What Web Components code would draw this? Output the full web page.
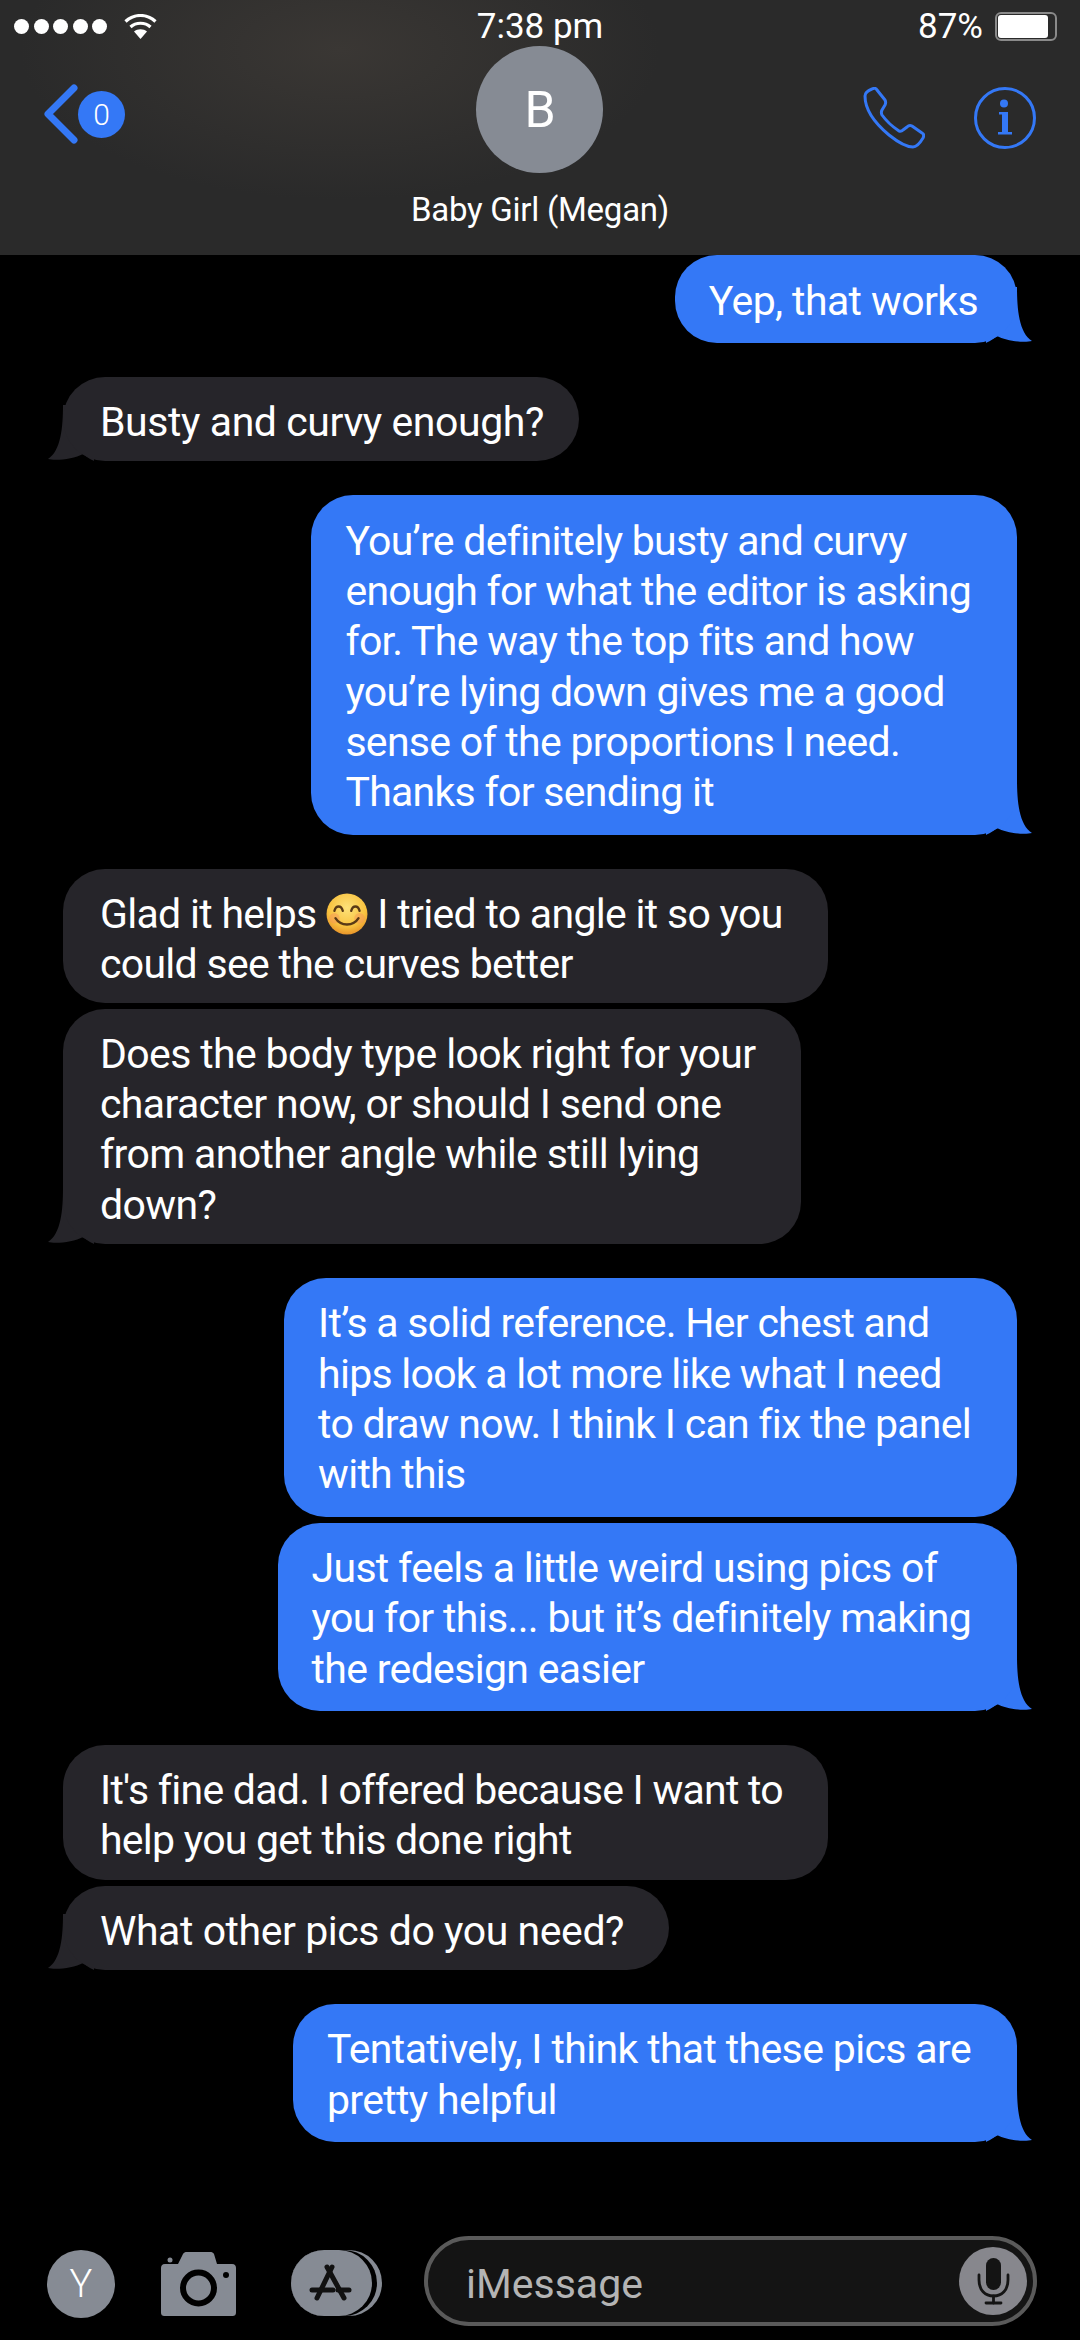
<!doctype html>
<html>
<head>
<meta charset="utf-8">
<title>Messages</title>
<style>
  html, body { margin: 0; padding: 0; background: #000; }
  body { width: 1080px; height: 2340px; overflow: hidden; font-family: Roboto, "Noto Sans", sans-serif; color: #fff; display: flex; flex-direction: column; }
  msg-list { flex: 1; }
</style>
</head>
<body>
<chat-header name="Baby Girl (Megan)" initial="B" badge="0"></chat-header>
<msg-list>
  <chat-bubble side="out" tail style="--pad-r:39px">Yep, that works</chat-bubble>
  <chat-bubble side="in" tail class="new" style="--pad-r:35px;--ls:-0.42px">Busty and curvy enough?</chat-bubble>
  <chat-bubble side="out" tail class="new" style="--ls:-0.72px">You’re definitely busty and curvy<br>enough for what the editor is asking<br>for. The way the top fits and how<br>you’re lying down gives me a good<br>sense of the proportions I need.<br>Thanks for sending it</chat-bubble>
  <chat-bubble side="in" class="new" style="--ls:-0.7px">Glad it helps <smile-emoji></smile-emoji> I tried to angle it so you<br>could see the curves better</chat-bubble>
  <chat-bubble side="in" tail style="--ls:-0.63px">Does the body type look right for your<br>character now, or should I send one<br>from another angle while still lying<br>down?</chat-bubble>
  <chat-bubble side="out" class="new" style="--ls:-0.74px">It’s a solid reference. Her chest and<br>hips look a lot more like what I need<br>to draw now. I think I can fix the panel<br>with this</chat-bubble>
  <chat-bubble side="out" tail style="--ls:-0.67px">Just feels a little weird using pics of<br>you for this... but it’s definitely making<br>the redesign easier</chat-bubble>
  <chat-bubble side="in" class="new" style="--ls:-0.74px">It's fine dad. I offered because I want to<br>help you get this done right</chat-bubble>
  <chat-bubble side="in" tail style="--ls:-0.44px">What other pics do you need?</chat-bubble>
  <chat-bubble side="out" tail class="new" style="--ls:-0.64px">Tentatively, I think that these pics are<br>pretty helpful</chat-bubble>
</msg-list>
<input-bar></input-bar>

<script>
class StatusBar extends HTMLElement {
  constructor() {
    super();
    this.attachShadow({ mode: "open" });
    this.shadowRoot.innerHTML = `
      <style>
        :host { display: grid; grid-template-columns: 1fr auto 1fr; align-items: center; height: 52px; padding: 0 23px; font-size: 35px; color: #fff; }
        .left { display: flex; align-items: center; gap: 17px; margin-left: -9px; }
        .dots { display: flex; gap: 4.5px; }
        .dots i { width: 15px; height: 15px; border-radius: 50%; background: #fff; }
        .right { display: flex; align-items: center; justify-content: flex-end; gap: 12px; }
        .batt { width: 62px; height: 29px; box-sizing: border-box; border: 2px solid #8a8a8a; border-radius: 6px; padding: 1px 7px 1px 1px; }
        .batt b { display: block; height: 100%; background: #fff; border-radius: 3px; }
      </style>
      <div class="left">
        <div class="dots"><i></i><i></i><i></i><i></i><i></i></div>
        <svg width="33" height="25" viewBox="0 0 33 25" fill="none" stroke="#fff" stroke-width="3.2">
          <path d="M1.5 7.5 C10 -0.5 23 -0.5 31.5 7.5"/><path d="M6.5 13 C12 8 21 8 26.5 13"/>
          <path d="M16.5 25 L10 17.5 C13.5 14.5 19.5 14.5 23 17.5 Z" fill="#fff" stroke="none"/>
        </svg>
      </div>
      <span>7:38 pm</span>
      <div class="right"><span>87%</span><div class="batt"><b></b></div></div>`;
  }
}
customElements.define("status-bar", StatusBar);

class ChatHeader extends HTMLElement {
  constructor() {
    super();
    this.attachShadow({ mode: "open" });
    this.shadowRoot.innerHTML = `
      <style>
        :host { display: block; height: 255px; flex: none; position: relative;
          background: radial-gradient(ellipse 320px 150px at 340px 50px, #3a3734, transparent), #2a2a2a; color: #fff; }
        .nav { display: grid; grid-template-columns: 1fr auto 1fr; align-items: start; padding: 0 44px; margin-top: -6px; }
        .back { display: flex; align-items: center; gap: 0; margin-top: 38px; }
        .badge { width: 47px; height: 47px; border-radius: 50%; background: #3478f6; font-size: 30px; font-weight: 300; display: flex; align-items: center; justify-content: center; }
        .mid { display: flex; flex-direction: column; align-items: center; }
        .avatar { width: 127px; height: 127px; border-radius: 50%; background: #868b94; font-size: 50px; display: flex; align-items: center; justify-content: center; }
        .name { font-size: 33px; line-height: 40px; margin-top: 17px; white-space: nowrap; letter-spacing: -0.25px; }
        .acts { display: flex; justify-content: flex-end; gap: 49px; margin-top: 41px; }
      </style>
      <status-bar></status-bar>
      <div class="nav">
        <div class="back">
          <svg width="34" height="60" viewBox="0 0 34 60" fill="none" stroke="#3478f6" stroke-width="7" stroke-linecap="round" stroke-linejoin="round"><path d="M30 4 L4 30 L30 56"/></svg>
          <span class="badge">${this.getAttribute("badge")}</span>
        </div>
        <div class="mid">
          <div class="avatar">${this.getAttribute("initial")}</div>
          <div class="name">${this.getAttribute("name")}</div>
        </div>
        <div class="acts">
          <svg width="62" height="62" viewBox="0 0 62 62" fill="none" stroke="#3478f6" stroke-width="3" stroke-linejoin="round">
            <path d="M2 9 C2 6 4 4 9 2 C11 1 13 1 14 3 L22 13 C23 15 23 16 22 18 L19 23 C18 25 18 26 19 28 C24 35 30 40 36 44 C38 44.5 39 44 40 43 L44 40 C46 38 47 38 49 39 L59 46 C61 47 61 49 60 51 C57 56 54 60 50 60 C44 60 36 56 26 48 C14 38 2 24 2 9 Z"/>
          </svg>
          <svg width="62" height="62" viewBox="0 0 62 62" fill="none" stroke="#3478f6" stroke-width="3">
            <circle cx="31" cy="31" r="29.5"/>
            <circle cx="30" cy="16.5" r="4" fill="#3478f6" stroke="none"/>
            <path d="M25 25 H34 V45 H38 V47.5 H24 V45 H28 V27.5 H25 Z" fill="#3478f6" stroke="none"/>
          </svg>
        </div>
      </div>`;
  }
}
customElements.define("chat-header", ChatHeader);

class MsgList extends HTMLElement {
  constructor() {
    super();
    this.attachShadow({ mode: "open" });
    this.shadowRoot.innerHTML = `
      <style>
        :host { display: flex; flex-direction: column; gap: 6px; padding: 0 63px; overflow: hidden; }
      </style>
      <slot></slot>`;
  }
}
customElements.define("msg-list", MsgList);

const bubbleTemplate = document.createElement("template");
bubbleTemplate.innerHTML = `
  <style>
    :host { display: block; align-self: flex-start; position: relative; font-size: 41px; line-height: 50.2px; letter-spacing: var(--ls, -0.6px); white-space: nowrap; color: #fff; }
    :host([side="out"]) { align-self: flex-end; }
    :host(.new) { margin-top: 28px; }
    .body { position: relative; z-index: 1; padding: 20px var(--pad-r, 45px) 14px 37px; border-radius: 42px; background: #26252a; }
    :host([side="out"]) .body { background: #3478f6; padding: 20.5px var(--pad-r, 46px) 17.5px 34px; }
    svg { display: none; position: absolute; bottom: 0; width: 46px; height: 56px; fill: #26252a; }
    :host([tail]) svg { display: block; }
    :host([side="in"]) svg { left: -15px; transform: scaleX(-1); }
    :host([side="out"]) svg { right: -15px; fill: #3478f6; }
  </style>
  <svg viewBox="0 0 46 56"><path d="M0 0 H31 C31 22 33 46 46 54 C38 56 20 54 11 49 C6 53 2 55 0 56 Z"/></svg>
  <div class="body"><slot></slot></div>`;
class ChatBubble extends HTMLElement {
  constructor() {
    super();
    this.attachShadow({ mode: "open" });
    this.shadowRoot.appendChild(bubbleTemplate.content.cloneNode(true));
  }
}
customElements.define("chat-bubble", ChatBubble);

class SmileEmoji extends HTMLElement {
  constructor() {
    super();
    this.attachShadow({ mode: "open" });
    this.shadowRoot.innerHTML = `
      <style>:host { display: inline-block; width: 42px; height: 42px; vertical-align: -7px; }</style>
      <svg width="42" height="42" viewBox="0 0 40 40">
        <defs><radialGradient id="f" cx="50%" cy="35%" r="65%"><stop offset="0" stop-color="#fde27a"/><stop offset="0.7" stop-color="#f8c23f"/><stop offset="1" stop-color="#e8952a"/></radialGradient></defs>
        <circle cx="20" cy="20" r="19.5" fill="url(#f)"/>
        <circle cx="8" cy="24" r="5" fill="#f4915a" opacity=".45"/><circle cx="32" cy="24" r="5" fill="#f4915a" opacity=".45"/>
        <path d="M8 17 C9.5 11.5 14.5 11.5 16 17 M24 17 C25.5 11.5 30.5 11.5 32 17" fill="none" stroke="#5a3a16" stroke-width="2.2" stroke-linecap="round"/>
        <path d="M9 24 C14 32 26 32 31 24" fill="none" stroke="#5a3a16" stroke-width="2.2" stroke-linecap="round"/>
      </svg>`;
  }
}
customElements.define("smile-emoji", SmileEmoji);

class InputBar extends HTMLElement {
  constructor() {
    super();
    this.attachShadow({ mode: "open" });
    this.shadowRoot.innerHTML = `
      <style>
        :host { display: flex; align-items: center; height: 90px; flex: none; padding: 0 43px 0 47px; margin-bottom: 14px; }
        .y { width: 68px; height: 68px; border-radius: 50%; background: #868b94; font-size: 38px; font-weight: 300; display: flex; align-items: center; justify-content: center; color: #fff; margin-top: 6px; }
        .cam { margin-left: 46px; margin-top: 6px; }
        .store { margin-left: 55px; margin-right: 42px; margin-top: 4px; }
        .field { flex: 1; height: 90px; box-sizing: border-box; border: 4px solid #5a5a5a; border-radius: 45px; background: #141414; display: flex; align-items: center; justify-content: space-between; padding: 0 6px 0 38px; font-size: 41px; color: #b4b4b4; }
        .field span { padding-top: 5px; }
        .mic { width: 68px; height: 68px; border-radius: 50%; background: #87878d; }
        .mic svg { display: block; }
      </style>
      <div class="y">Y</div>
      <svg class="cam" width="75" height="64" viewBox="0 0 75 64">
        <path fill="#868b94" d="M4 12 H17 L22 2 C23 0.5 24 0 26 0 H49 C51 0 52 0.5 53 2 L56 12 H71 C74 12 75 14 75 16 V60 C75 63 74 64 71 64 H4 C1 64 0 63 0 60 V16 C0 14 1 12 4 12 Z"/>
        <circle cx="9" cy="8" r="2.5" fill="#868b94"/>
        <circle cx="37.5" cy="36" r="15.5" fill="#868b94" stroke="#000" stroke-width="6"/>
        <circle cx="65" cy="23" r="3" fill="#000"/>
      </svg>
      <svg class="store" width="91" height="66" viewBox="0 0 91 66">
        <rect width="91" height="66" rx="33" fill="#868b94"/>
        <rect width="86" height="66" rx="33" fill="#000"/>
        <rect width="81" height="66" rx="33" fill="#868b94"/>
        <g stroke="#111" stroke-width="5" stroke-linecap="round" fill="none">
          <path d="M41 17 L26 48"/><path d="M36 17 L53 48"/><path d="M21 40 H42"/><path d="M47 40 H58"/>
        </g>
      </svg>
      <div class="field"><span>iMessage</span>
        <div class="mic"><svg width="68" height="68" viewBox="0 0 68 68" fill="none" stroke="#141414" stroke-width="2.8" stroke-linecap="round"><rect x="27" y="11" width="15" height="32" rx="7.5" fill="#141414" stroke="none"/><path d="M20 28 V33 C20 43 26 49 34.5 49 C43 49 49 43 49 33 V28"/><path d="M34.5 49 V56"/><path d="M27 56 H42"/></svg></div>
      </div>`;
  }
}
customElements.define("input-bar", InputBar);
</script>
</body>
</html>
